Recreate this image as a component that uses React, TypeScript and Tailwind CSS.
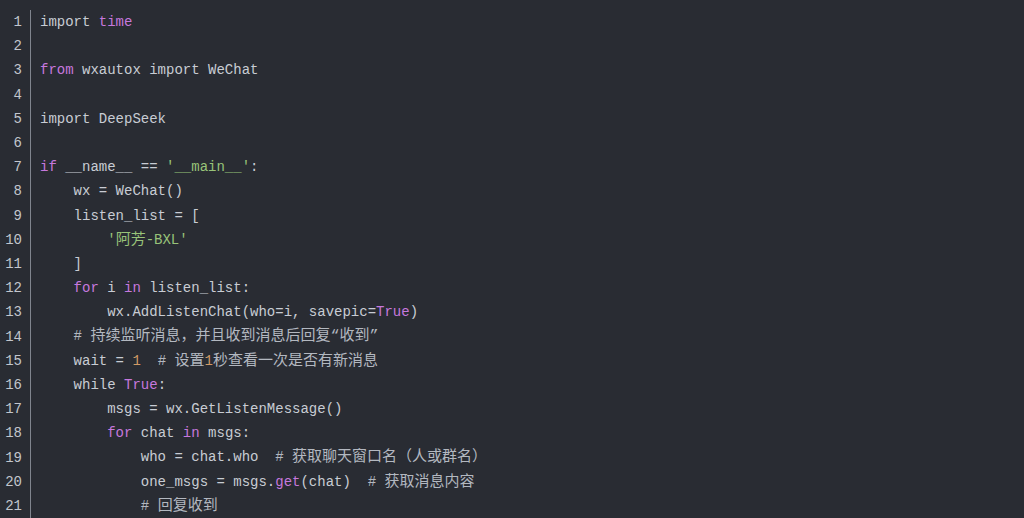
type Tok = [string, string?];

const KW = 'text-[#c678dd]';
const STR = 'text-[#98c379]';
const NUM = 'text-[#d19a66]';
const CMT = 'text-[#b3b8c0]';

const lines: Tok[][] = [
  [['import '], ['time', KW]],
  [],
  [['from', KW], [' wxautox import WeChat']],
  [],
  [['import DeepSeek']],
  [],
  [['if', KW], [' __name__ == '], ["'__main__'", STR], [':']],
  [['    wx = WeChat()']],
  [['    listen_list = [']],
  [['        '], ["'阿芳-BXL'", STR]],
  [['    ]']],
  [['    '], ['for', KW], [' i '], ['in', KW], [' listen_list:']],
  [['        wx.AddListenChat(who=i, savepic='], ['True', KW], [')']],
  [['    '], ['# 持续监听消息，并且收到消息后回复“收到”', CMT]],
  [['    wait = '], ['1', NUM], ['  '], ['# 设置', CMT], ['1', NUM], ['秒查看一次是否有新消息', CMT]],
  [['    while '], ['True', KW], [':']],
  [['        msgs = wx.GetListenMessage()']],
  [['        '], ['for', KW], [' chat '], ['in', KW], [' msgs:']],
  [['            who = chat.who  '], ['# 获取聊天窗口名（人或群名）', CMT]],
  [['            one_msgs = msgs.'], ['get', KW], ['(chat)  '], ['# 获取消息内容', CMT]],
  [['            '], ['# 回复收到', CMT]],
];

// CJK glyphs in the shot render a touch wider than 14px
function Run({ text }: { text: string }) {
  const parts = text.split(/([\u3000-\u303f\u4e00-\u9fff\uff00-\uffef“”]+)/);
  return (
    <>
      {parts.map((p, i) =>
        i % 2 === 1 ? (
          <span key={i} className="text-[15px]">
            {p}
          </span>
        ) : (
          p
        )
      )}
    </>
  );
}

export default function App() {
  return (
    <div
      className="w-[1024px] h-[518px] overflow-hidden bg-[#292c33] text-[#c8ccd4] text-[14px] leading-[24.2px] pt-[10px]"
      style={{ fontFamily: '"Liberation Mono", "Noto Sans CJK SC", monospace' }}
    >
      <div className="flex">
        <div className="w-[31px] shrink-0 border-r border-[#80858e] pr-[8px] text-right text-[#c2c6cd]">
          {lines.map((_, i) => (
            <div key={i}>{i + 1}</div>
          ))}
          <div className="h-[40px]" />
        </div>
        <div className="pl-[9px] whitespace-pre">
          {lines.map((toks, i) => (
            <div key={i} className="h-[24.2px]">
              {toks.map(([t, c], j) => (
                <span key={j} className={c}>
                  <Run text={t} />
                </span>
              ))}
            </div>
          ))}
        </div>
      </div>
    </div>
  );
}
